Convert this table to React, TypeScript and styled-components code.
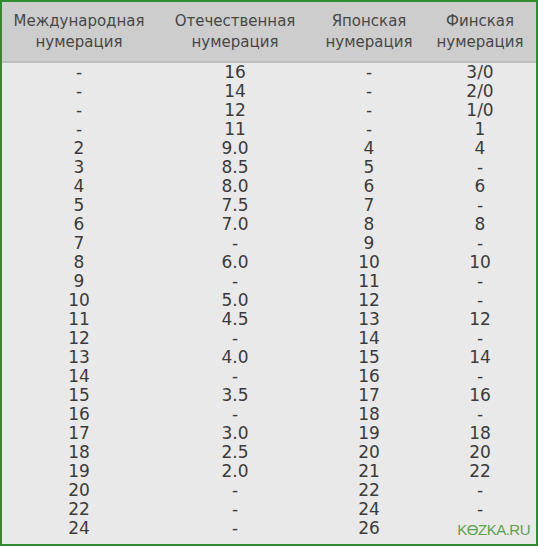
import React from 'react';
import styled, { createGlobalStyle } from 'styled-components';

const GlobalStyle = createGlobalStyle`
  html, body {
    margin: 0;
    padding: 0;
    background: #ffffff;
  }
`;

const Frame = styled.div`
  position: relative;
  width: 538px;
  height: 546px;
  box-sizing: border-box;
  border: 2px solid #2f8a30;
  background: #e9e9e9;
  overflow: hidden;
  font-family: "DejaVu Sans", Verdana, sans-serif;
  color: #3b3b3b;
`;

const Table = styled.table`
  width: 534px;
  border-collapse: collapse;
  table-layout: fixed;
`;

const HeadRow = styled.tr`
  background: #cdcdcd;
  border-bottom: 2px solid #bdbdbd;
`;

const HeadCell = styled.th<{ $w: number }>`
  width: ${p => p.$w}px;
  height: 59px;
  padding: 0;
  font-weight: normal;
  font-size: 15px;
  line-height: 21px;
  text-align: center;
  vertical-align: middle;
  color: #474747;
`;

const Cell = styled.td`
  height: 19px;
  padding: 0;
  font-size: 17px;
  line-height: 19px;
  text-align: center;
  white-space: nowrap;
`;

const Watermark = styled.div`
  position: absolute;
  right: 6px;
  bottom: 6px;
  font-family: "Liberation Sans", Arial, sans-serif;
  font-size: 15px;
  letter-spacing: -0.5px;
  color: #5ea24f;
`;

const columns = [
  { title: ['Международная', 'нумерация'], w: 154 },
  { title: ['Отечественная', 'нумерация'], w: 158 },
  { title: ['Японская', 'нумерация'], w: 110 },
  { title: ['Финская', 'нумерация'], w: 112 },
];

const rows: string[][] = [
  ['-', '16', '-', '3/0'],
  ['-', '14', '-', '2/0'],
  ['-', '12', '-', '1/0'],
  ['-', '11', '-', '1'],
  ['2', '9.0', '4', '4'],
  ['3', '8.5', '5', '-'],
  ['4', '8.0', '6', '6'],
  ['5', '7.5', '7', '-'],
  ['6', '7.0', '8', '8'],
  ['7', '-', '9', '-'],
  ['8', '6.0', '10', '10'],
  ['9', '-', '11', '-'],
  ['10', '5.0', '12', '-'],
  ['11', '4.5', '13', '12'],
  ['12', '-', '14', '-'],
  ['13', '4.0', '15', '14'],
  ['14', '-', '16', '-'],
  ['15', '3.5', '17', '16'],
  ['16', '-', '18', '-'],
  ['17', '3.0', '19', '18'],
  ['18', '2.5', '20', '20'],
  ['19', '2.0', '21', '22'],
  ['20', '-', '22', '-'],
  ['22', '-', '24', '-'],
  ['24', '-', '26', ''],
];

export default function App() {
  return (
    <>
      <GlobalStyle />
      <Frame>
        <Table>
          <thead>
            <HeadRow>
              {columns.map(c => (
                <HeadCell key={c.title[0]} $w={c.w}>
                  {c.title[0]}
                  <br />
                  {c.title[1]}
                </HeadCell>
              ))}
            </HeadRow>
          </thead>
          <tbody>
            {rows.map((r, i) => (
              <tr key={i}>
                {r.map((v, j) => (
                  <Cell key={j}>{v}</Cell>
                ))}
              </tr>
            ))}
          </tbody>
        </Table>
        <Watermark>KƟZKA.RU</Watermark>
      </Frame>
    </>
  );
}
